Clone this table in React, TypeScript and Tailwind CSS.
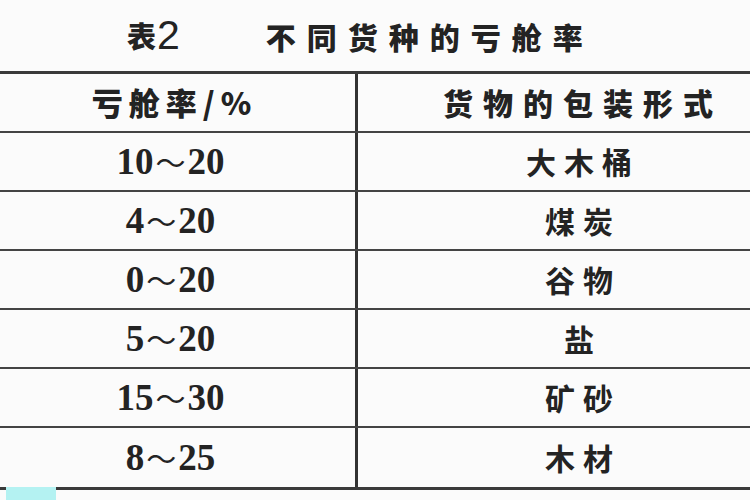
const rows = [
  { from: "10", to: "20", pack: "大木桶" },
  { from: "4", to: "20", pack: "煤炭" },
  { from: "0", to: "20", pack: "谷物" },
  { from: "5", to: "20", pack: "盐" },
  { from: "15", to: "30", pack: "矿砂" },
  { from: "8", to: "25", pack: "木材" },
];

const cjk = "font-['Noto_Sans_CJK_SC',sans-serif]";
const num = "font-['Liberation_Serif',serif]";

const App = () => {
  return (
    <div className="w-[750px] h-[500px] overflow-hidden bg-[#fbfbfb] text-[#232323] relative">
      {/* Title */}
      <div className="h-[71px] flex items-center pl-[127px]">
        <span className={`${cjk} font-black text-[29px] leading-none`}>表</span>
        <span className="font-['Liberation_Sans',sans-serif] text-[41px] leading-none ml-[1px]">2</span>
        <span className={`${cjk} font-black text-[30px] leading-none tracking-[11px] ml-[86px]`}>
          不同货种的亏舱率
        </span>
      </div>

      {/* Table */}
      <div className="w-[808px] border-t-[3px] border-b-[3px] border-[#3a3a3a]">
        <div className="grid grid-cols-[358px_450px] h-[59px] border-b-2 border-[#444]">
          <div className={`${cjk} font-black text-[31px] flex items-center justify-center border-r-[3px] border-[#333] tracking-[6px] pr-[6px]`}>
            亏舱率/%
          </div>
          <div className={`${cjk} font-black text-[30px] flex items-center justify-center tracking-[10px]`}>
            货物的包装形式
          </div>
        </div>
        {rows.map((row, i) => (
          <div
            key={i}
            className={`grid grid-cols-[358px_450px] h-[59px] ${
              i < rows.length - 1 ? "border-b-2 border-[#444]" : ""
            }`}
          >
            <div className={`${num} font-bold text-[37px] flex items-center justify-center border-r-[3px] border-[#333] pr-[14px]`}>
              <span>{row.from}</span>
              <span className={`${cjk} font-normal text-[30px] mx-[2px]`}>～</span>
              <span>{row.to}</span>
            </div>
            <div className={`${cjk} font-bold text-[30px] flex items-center justify-center tracking-[8px]`}>
              {row.pack}
            </div>
          </div>
        ))}
      </div>

      {/* scan artifact */}
      <div className="absolute left-[6px] bottom-0 w-[50px] h-[13px] bg-[#b4f2f2]" />
    </div>
  );
};

export default App;
